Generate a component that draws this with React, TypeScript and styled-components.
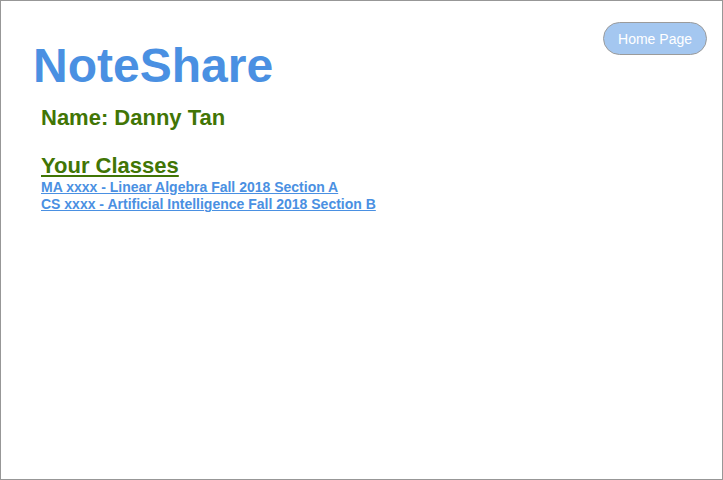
import styled, { createGlobalStyle } from "styled-components";

const GlobalStyle = createGlobalStyle`
  html, body {
    margin: 0;
    padding: 0;
    background: #ffffff;
  }
  body {
    font-family: "Liberation Sans", Arial, Helvetica, sans-serif;
  }
`;

const Frame = styled.div`
  box-sizing: border-box;
  width: 723px;
  height: 480px;
  border: 1px solid #979797;
  background: #ffffff;
`;

const Header = styled.header`
  display: flex;
  justify-content: space-between;
  align-items: flex-start;
  padding: 21px 15px 0 32px;
`;

const Title = styled.h1`
  margin: 20px 0 0 0;
  font-size: 48px;
  line-height: 48px;
  font-weight: bold;
  color: #4a90e2;
`;

const HomeButton = styled.button`
  box-sizing: border-box;
  height: 33px;
  padding: 0 14px;
  border: 1px solid #9b9b9b;
  border-radius: 17px;
  background: #a4c7f0;
  color: #ffffff;
  font-family: "Liberation Sans", Arial, sans-serif;
  font-size: 14px;
  cursor: pointer;
`;

const Content = styled.main`
  padding: 0 0 0 40px;
`;

const Heading = styled.h2<{ $underline?: boolean; $gap: number }>`
  margin: ${({ $gap }) => $gap}px 0 0 0;
  font-size: 22px;
  line-height: 22px;
  font-weight: bold;
  color: #417505;
  text-decoration: ${({ $underline }) => ($underline ? "underline" : "none")};
`;

const ClassList = styled.ul`
  list-style: none;
  margin: 2px 0 0 0;
  padding: 0;
`;

const ClassLink = styled.a`
  display: block;
  font-size: 14px;
  line-height: 17px;
  font-weight: bold;
  color: #4a90e2;
  text-decoration: underline;
`;

const classes = [
  "MA xxxx - Linear Algebra Fall 2018 Section A",
  "CS xxxx - Artificial Intelligence Fall 2018 Section B",
];

export default function App() {
  return (
    <>
      <GlobalStyle />
      <Frame>
        <Header>
          <Title>NoteShare</Title>
          <HomeButton>Home Page</HomeButton>
        </Header>
        <Content>
          <Heading $gap={17}>Name: Danny Tan</Heading>
          <Heading $gap={26} $underline>
            Your Classes
          </Heading>
          <ClassList>
            {classes.map((c) => (
              <li key={c}>
                <ClassLink href="#">{c}</ClassLink>
              </li>
            ))}
          </ClassList>
        </Content>
      </Frame>
    </>
  );
}
